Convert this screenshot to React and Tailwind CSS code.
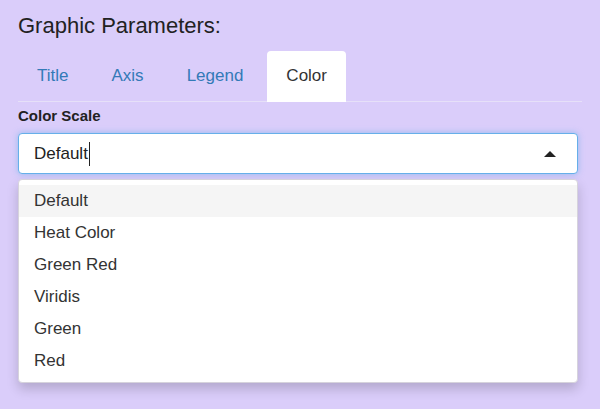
import React from "react";

export default function App() {
  const tabs = ["Title", "Axis", "Legend", "Color"];
  const items = ["Default", "Heat Color", "Green Red", "Viridis", "Green", "Red"];
  return (
    <div
      className="w-[600px] h-[409px] bg-[#dacdfa] px-[18px] pt-[13px] overflow-hidden"
      style={{ fontFamily: '"Liberation Sans", Arial, sans-serif' }}
    >
      <div className="text-[22px] leading-[26px] text-[#222]">Graphic Parameters:</div>
      <div className="mt-[12px] flex gap-[5px] border-b border-[#e6e0f8]">
        {tabs.map((t) => (
          <div
            key={t}
            className={
              t === "Color"
                ? "px-[19px] py-[13px] text-[17px] leading-[24px] text-[#333] bg-white rounded-t-[4px] -mb-px"
                : "px-[19px] py-[13px] text-[17px] leading-[24px] text-[#337ab7]"
            }
          >
            {t}
          </div>
        ))}
      </div>
      <div className="mt-[4px] text-[15px] leading-[20px] font-bold text-[#222]">Color Scale</div>
      <div className="mt-[7px] h-[41px] w-[560px] bg-white border border-[#66afe9] rounded-[4px] shadow-[0_0_6px_rgba(102,175,233,0.6)] flex items-center pl-[15px] pr-[21px]">
        <span className="text-[17px] leading-[24px] text-[#222]">Default</span>
        <span className="w-px h-[24px] bg-[#222] ml-[1px]"></span>
        <div className="flex-1"></div>
        <svg width="12" height="6" viewBox="0 0 12 6">
          <path d="M0 6 L6 0 L12 6 Z" fill="#222" />
        </svg>
      </div>
      <div className="mt-[5px] w-[560px] bg-white border border-[#d6d3dc] rounded-[4px] shadow-[0_6px_12px_rgba(0,0,0,0.18)] pt-[5px] pb-[5px]">
        {items.map((it, i) => (
          <div
            key={it}
            className={
              i === 0
                ? "h-[32px] flex items-center px-[15px] text-[17px] text-[#333] bg-[#f5f5f5]"
                : "h-[32px] flex items-center px-[15px] text-[17px] text-[#333]"
            }
          >
            {it}
          </div>
        ))}
      </div>
    </div>
  );
}
